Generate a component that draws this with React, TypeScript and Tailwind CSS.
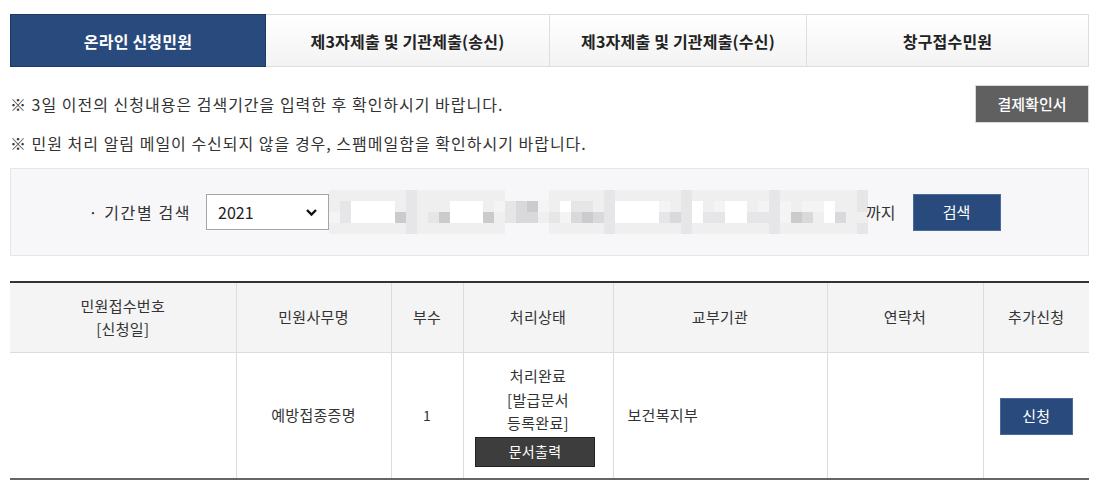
import React from 'react'

const FONT = '[font-family:"Noto_Sans_CJK_KR","Liberation_Sans",sans-serif]'

const tabs = ['온라인 신청민원', '제3자제출 및 기관제출(송신)', '제3자제출 및 기관제출(수신)', '창구접수민원']
const tabWidths = ['w-[256px]', 'w-[284px]', 'w-[257px]', 'flex-1']

// mosaic of the masked date range (each char = one 11px block)
const COLORS: Record<string, string> = {
  W: '#ffffff',
  A: '#f4f4f4',
  L: '#efefef',
  M: '#e6e6e8',
  D: '#d9d9db',
  K: '#cbcbcb',
  B: 'transparent',
}
const mosaic = [
  'LLLLLLLMLLLLLLLLBBBBLLLLLMLLLLLLMLLLLLLLMLLLLLLLM',
  'LMWWWWLMLLLWWWLAMDKALWMMLMWWWWALMWLAWWLAMALAAWLLM',
  'AMWWWWKMLMKWWWKLMDDLMADKDMWWWWMDMWMMWWMMMAKDLWDLL',
  'LLLLLLLMLLLLLLLLBBBBLLLLLMLLLLLLMLLLLLLLMLLLLLLLM',
]

function Mosaic() {
  return (
    <div className="flex flex-col">
      {mosaic.map((row, r) => (
        <div key={r} className="flex">
          {row.split('').map((c, i) => (
            <div key={i} className="w-[11px] h-[11px]" style={{ background: COLORS[c] }} />
          ))}
        </div>
      ))}
    </div>
  )
}

const cols = [226, 155, 72, 150, 214, 156, 106]

export default function App() {
  return (
    <div className={`w-[1097px] h-[489px] bg-white pt-[14px] ${FONT} text-[#333]`}>
      <div className="ml-[10px] w-[1079px]">
        {/* tabs */}
        <div className="flex h-[53px]">
          {tabs.map((t, i) => (
            <div
              key={t}
              className={`${tabWidths[i]} flex items-center justify-center text-[16px] tracking-[0.2px] font-bold ${
                i === 0
                  ? 'bg-[#284a7c] text-white border border-[#1d3a66]'
                  : 'bg-gradient-to-b from-white to-[#f3f3f3] text-[#222] border-y border-r border-[#dedede]'
              }`}
            >
              {t}
            </div>
          ))}
        </div>

        {/* notices */}
        <div className="mt-[18px] flex justify-between">
          <div className="pt-[7px] text-[16px] tracking-[1px] leading-[24px] text-[#333]">
            <p>※ 3일 이전의 신청내용은 검색기간을 입력한 후 확인하시기 바랍니다.</p>
            <p className="mt-[15px]">※ 민원 처리 알림 메일이 수신되지 않을 경우, 스팸메일함을 확인하시기 바랍니다.</p>
          </div>
          <button className="w-[114px] h-[38px] bg-[#606060] border border-[#d8d8d8] text-white text-[15px] font-medium">
            결제확인서
          </button>
        </div>

        {/* search box */}
        <div className="mt-[13px] h-[88px] pr-[10px] bg-[#f7f7f9] border border-[#e6e6ea] flex items-center justify-center">
          <span className="text-[16px] tracking-[1.6px] text-[#333] mr-[15px]">· 기간별 검색</span>
          <div className="relative w-[123px] h-[36px] bg-white border border-[#a5a5a5]">
            <select className="appearance-none w-full h-full bg-transparent pl-[11px] text-[16px] text-[#222] outline-none">
              <option>2021</option>
            </select>
            <svg
              className="absolute right-[10px] top-[13px] pointer-events-none"
              width="13"
              height="9"
              viewBox="0 0 13 9"
            >
              <path d="M2 2l4.5 4.5L11 2" fill="none" stroke="#111" strokeWidth="2.4" />
            </svg>
          </div>
          <Mosaic />
          <span className="text-[16px] text-[#333] -ml-[2px]">까지</span>
          <button className="ml-[17px] w-[88px] h-[37px] bg-[#284a7c] border border-[#4a6a9a] text-white text-[15px]">
            검색
          </button>
        </div>

        {/* result table */}
        <table className="mt-[25px] w-full table-fixed border-collapse border-t-2 border-t-[#333] border-b-2 border-b-[#666] text-[15px] tracking-[0.3px] text-[#333]">
          <colgroup>
            {cols.map((w, i) => (
              <col key={i} style={{ width: w }} />
            ))}
          </colgroup>
          <thead>
            <tr className="h-[70px] bg-[#f4f4f4] border-b border-[#dcdcdc]">
              <th className="font-normal leading-[23px]">
                민원접수번호
                <br />
                [신청일]
              </th>
              <th className="font-normal border-l border-[#dcdcdc]">민원사무명</th>
              <th className="font-normal border-l border-[#dcdcdc]">부수</th>
              <th className="font-normal border-l border-[#dcdcdc]">처리상태</th>
              <th className="font-normal border-l border-[#dcdcdc]">교부기관</th>
              <th className="font-normal border-l border-[#dcdcdc]">연락처</th>
              <th className="font-normal border-l border-[#dcdcdc]">추가신청</th>
            </tr>
          </thead>
          <tbody>
            <tr className="h-[127px]">
              <td></td>
              <td className="text-center border-l border-[#dcdcdc]">예방접종증명</td>
              <td className="text-center border-l border-[#dcdcdc] text-[14px]">1</td>
              <td className="border-l border-[#dcdcdc]">
                <div className="flex flex-col items-center leading-[23.5px]">
                  <span>처리완료</span>
                  <span>[발급문서</span>
                  <span>등록완료]</span>
                  <button className="mt-[2px] mr-[6px] w-[120px] h-[30px] bg-[#3d3d3d] border border-[#222] text-white text-[14px]">
                    문서출력
                  </button>
                </div>
              </td>
              <td className="pl-[14px] border-l border-[#dcdcdc]">보건복지부</td>
              <td className="border-l border-[#dcdcdc]"></td>
              <td className="border-l border-[#dcdcdc]">
                <div className="flex justify-center">
                  <button className="w-[73px] h-[37px] bg-[#284a7c] border border-[#4a6a9a] text-white text-[15px] mt-[2px]">
                    신청
                  </button>
                </div>
              </td>
            </tr>
          </tbody>
        </table>
      </div>
    </div>
  )
}
